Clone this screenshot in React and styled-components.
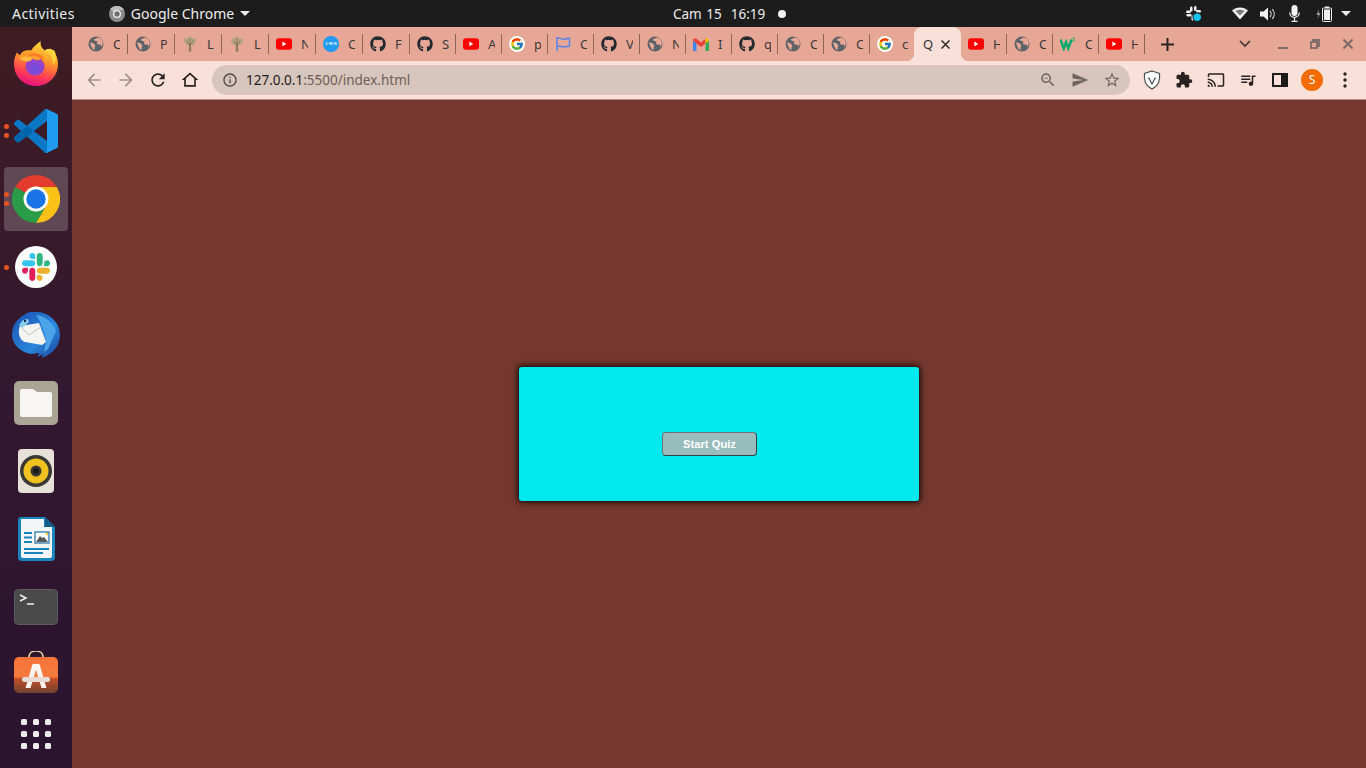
import React from "react";
import styled, { createGlobalStyle } from "styled-components";
import { FaGithub } from "react-icons/fa";
import { FcGoogle } from "react-icons/fc";

const Global = createGlobalStyle`
  html, body { margin: 0; padding: 0; height: 100%; overflow: hidden; }
  #root { height: 100%; }
  * { box-sizing: border-box; }
`;

const Screen = styled.div`
  width: 1366px;
  height: 768px;
  display: grid;
  grid-template-columns: 72px 1fr;
  grid-template-rows: 27px 1fr;
  font-family: "Noto Sans", sans-serif;
`;

/* ---------- GNOME top bar ---------- */
const TopBar = styled.header`
  grid-column: 1 / 3;
  display: flex;
  align-items: center;
  background: #1c1c1c;
  color: #ececec;
  font-size: 13.5px;
  white-space: nowrap;
`;
const TopLeft = styled.div`
  width: 673px;
  display: flex;
  align-items: center;
  padding-left: 12px;
`;
const Activities = styled.span`
  font-size: 14px;
  letter-spacing: 0.45px;
`;
const AppMenu = styled.div`
  display: flex;
  align-items: center;
  gap: 6px;
  margin-left: 34px;
  font-size: 14px;
`;
const Clock = styled.div`
  display: flex;
  align-items: center;
  gap: 13px;
  word-spacing: 1px;
`;
const ClockDot = styled.span`
  width: 8px;
  height: 8px;
  border-radius: 50%;
  background: #f2f2f2;
`;
const Tray = styled.div`
  margin-left: auto;
  margin-right: 15px;
  display: flex;
  align-items: center;
`;
const TraySlot = styled.span`
  display: flex;
  justify-content: center;
  width: ${(p) => p.$w}px;
`;
const Caret = styled.span`
  width: 0;
  height: 0;
  border-left: 5px solid transparent;
  border-right: 5px solid transparent;
  border-top: 5px solid #ececec;
`;

/* ---------- Dock ---------- */
const Dock = styled.nav`
  display: flex;
  flex-direction: column;
  align-items: center;
  gap: 4px;
  padding: 4px 0 11px;
  background: linear-gradient(180deg, #3f1c24 0%, #34182e 45%, #2b1430 100%);
`;
const DockItem = styled.div`
  position: relative;
  width: 64px;
  height: 64px;
  display: flex;
  align-items: center;
  justify-content: center;
  border-radius: 4px;
  background: ${(p) => (p.$active ? "rgba(255,255,255,0.2)" : "transparent")};
`;
const RunDots = styled.div`
  position: absolute;
  left: 0;
  top: 0;
  bottom: 0;
  display: flex;
  flex-direction: column;
  justify-content: center;
  gap: 4px;
`;
const RunDot = styled.span`
  width: 5px;
  height: 5px;
  border-radius: 50%;
  background: #e95420;
`;
const AppGrid = styled.div`
  margin-top: auto;
  display: grid;
  grid-template-columns: repeat(3, 6px);
  grid-auto-rows: 6px;
  gap: 6px;
  margin-bottom: 8px;
`;
const AppGridCell = styled.span`
  background: #eeeeee;
  border-radius: 1.5px;
`;

/* ---------- Chrome window ---------- */
const Browser = styled.div`
  display: flex;
  flex-direction: column;
  min-width: 0;
`;
const TabStrip = styled.div`
  height: 34px;
  display: flex;
  align-items: stretch;
  padding-left: 8px;
  background: #e7a797;
`;
const Tab = styled.div`
  position: relative;
  flex: 0 0 ${(p) => p.$w}px;
  display: flex;
  align-items: center;
  gap: 9px;
  padding-left: 8px;
  color: #3a3a3a;
  font-size: 13px;
  &::after {
    content: "";
    display: ${(p) => (p.$nosep ? "none" : "block")};
    position: absolute;
    right: -1px;
    top: 7px;
    height: 20px;
    width: 1px;
    background: #8f6459;
  }
`;
const ActiveTab = styled.div`
  position: relative;
  flex: 0 0 47px;
  margin-right: -1px;
  display: flex;
  align-items: center;
  gap: 7px;
  padding-left: 9px;
  background: #f9e0d8;
  border-radius: 8px 8px 0 0;
  color: #333;
  font-size: 13px;
  &::before, &::after {
    content: "";
    position: absolute;
    bottom: 0;
    width: 8px;
    height: 8px;
  }
  &::before {
    left: -8px;
    background: radial-gradient(circle at 0 0, transparent 8px, #f9e0d8 8.5px);
  }
  &::after {
    right: -8px;
    background: radial-gradient(circle at 100% 0, transparent 8px, #f9e0d8 8.5px);
  }
`;
const TabLabel = styled.span`
  width: ${(p) => p.$w || 7}px;
  overflow: hidden;
  white-space: nowrap;
`;
const StripControl = styled.span`
  display: flex;
  align-items: center;
  justify-content: center;
  width: ${(p) => p.$w}px;
  margin-left: ${(p) => p.$ml || 0}px;
`;
const Favicon = styled.span`
  flex: none;
  width: 16px;
  height: 16px;
  display: flex;
  align-items: center;
  justify-content: center;
  color: #24292e;
`;
const GoogleBadge = styled.span`
  width: 16px;
  height: 16px;
  display: flex;
  align-items: center;
  justify-content: center;
  border-radius: 50%;
  background: #fff;
`;

const Toolbar = styled.div`
  height: 39px;
  display: flex;
  align-items: center;
  padding: 0 5px 1px 6px;
  background: #f9e0d8;
  border-bottom: 1px solid #b48d80;
`;
const ToolBtn = styled.span`
  flex: none;
  width: ${(p) => p.$w || 32}px;
  height: 30px;
  display: flex;
  align-items: center;
  justify-content: center;
  color: ${(p) => p.$c || "#2a2221"};
`;
const Omnibox = styled.div`
  flex: none;
  width: 918px;
  height: 30px;
  margin: 0 6px;
  padding: 0 2px 0 8px;
  display: flex;
  align-items: center;
  border-radius: 15px;
  background: #d8c6be;
`;
const Url = styled.div`
  margin-left: 6px;
  flex: 1;
  font-size: 13.5px;
  color: #6b5f5b;
  white-space: nowrap;
`;
const UrlHost = styled.span`
  color: #211c1b;
`;
const Avatar = styled.span`
  width: 22px;
  height: 22px;
  border-radius: 50%;
  display: flex;
  align-items: center;
  justify-content: center;
  background: #f56b00;
  color: #fff;
  font-size: 12px;
`;

/* ---------- Page ---------- */
const Page = styled.main`
  flex: 1;
  display: flex;
  align-items: center;
  justify-content: center;
  background: #75382e;
`;
const QuizCard = styled.section`
  width: 400px;
  height: 134px;
  padding: 65px 0 0 143px;
  background: #00e9ee;
  border-radius: 3px;
  box-shadow: 0 0 6px 1px rgba(0, 0, 0, 0.95);
`;
const StartButton = styled.button`
  display: block;
  width: 95px;
  height: 24px;
  padding: 0;
  background: #97bcbb;
  border: 1px solid;
  border-color: #707070 #33434a #33434a #707070;
  border-radius: 4px;
  color: #fff;
  font: bold 11.2px "Liberation Sans", Arial, sans-serif;
`;

/* ---------- Icons ---------- */
const M = ({ d, s = 20, c = "currentColor" }) => (
  <svg width={s} height={s} viewBox="0 0 24 24" fill={c}><path d={d} /></svg>
);
const P = {
  back: "M20 11H7.83l5.59-5.59L12 4l-8 8 8 8 1.41-1.41L7.83 13H20v-2z",
  fwd: "M12 4l-1.41 1.41L16.17 11H4v2h12.17l-5.58 5.59L12 20l8-8z",
  reload: "M17.65 6.35C16.2 4.9 14.21 4 12 4c-4.42 0-7.99 3.58-7.99 8s3.57 8 7.99 8c3.73 0 6.84-2.55 7.73-6h-2.08c-.82 2.33-3.04 4-5.65 4-3.31 0-6-2.69-6-6s2.69-6 6-6c1.66 0 3.14.69 4.22 1.78L13 11h7V4l-2.35 2.35z",
  home: "M12 3L2 12h3v8h14v-8h3L12 3zm5 15H7v-7.81l5-4.5 5 4.5V18z",
  info: "M11 7h2v2h-2zm0 4h2v6h-2zm1-9C6.48 2 2 6.48 2 12s4.48 10 10 10 10-4.48 10-10S17.52 2 12 2zm0 18c-4.41 0-8-3.59-8-8s3.59-8 8-8 8 3.59 8 8-3.59 8-8 8z",
  zoom: "M15.5 14h-.79l-.28-.27C15.41 12.59 16 11.11 16 9.5 16 5.91 13.09 3 9.5 3S3 5.91 3 9.5 5.91 16 9.5 16c1.61 0 3.09-.59 4.23-1.57l.27.28v.79l5 4.99L20.49 19l-4.99-5zm-6 0C7.01 14 5 11.99 5 9.5S7.01 5 9.5 5 14 7.01 14 9.5 11.99 14 9.5 14zM7 9h5v1H7z",
  send: "M2.01 21L23 12 2.01 3 2 10l15 2-15 2z",
  star: "M22 9.24l-7.19-.62L12 2 9.19 8.63 2 9.24l5.46 4.73L5.82 21 12 17.27 18.18 21l-1.63-7.03L22 9.24zM12 15.4l-3.76 2.27 1-4.28-3.32-2.88 4.38-.38L12 6.1l1.71 4.04 4.38.38-3.32 2.88 1 4.28L12 15.4z",
  puzzle: "M20.5 11H19V7c0-1.1-.9-2-2-2h-4V3.5C13 2.12 11.88 1 10.5 1S8 2.12 8 3.5V5H4c-1.1 0-1.99.9-1.99 2v3.8H3.5c1.49 0 2.7 1.21 2.7 2.7s-1.21 2.7-2.7 2.7H2V20c0 1.1.9 2 2 2h3.8v-1.5c0-1.49 1.21-2.7 2.7-2.7 1.49 0 2.7 1.21 2.7 2.7V22H17c1.1 0 2-.9 2-2v-4h1.5c1.38 0 2.5-1.12 2.5-2.5S21.88 11 20.5 11z",
  cast: "M21 3H3c-1.1 0-2 .9-2 2v3h2V5h18v14h-7v2h7c1.1 0 2-.9 2-2V5c0-1.1-.9-2-2-2zM1 18v3h3c0-1.66-1.34-3-3-3zm0-4v2c2.76 0 5 2.24 5 5h2c0-3.87-3.13-7-7-7zm0-4v2c4.97 0 9 4.03 9 9h2c0-6.08-4.93-11-11-11z",
  queue: "M15 6H3v2h12V6zm0 4H3v2h12v-2zM3 16h8v-2H3v2zM17 6v8.18c-.31-.11-.65-.18-1-.18-1.66 0-3 1.34-3 3s1.34 3 3 3 3-1.34 3-3V8h3V6h-5z",
};

const Globe = () => (
  <svg width="16" height="16" viewBox="0 0 16 16">
    <circle cx="8" cy="8" r="7.5" fill="#5f6368" />
    <path d="M2 6.5l3 .5 2 2 .3 1.6-1 1.2.6 2.2L4.5 13 3 9.5zM9.5 1.5L7 3 5.5 3.2 7 5l2.5.3-.7 1.7 1 1.4 3 .3.8 2.3 1-2.4.3-2.4-1.9-3.6z" fill="#e7a797" />
  </svg>
);
const Tree = () => (
  <svg width="16" height="16" viewBox="0 0 16 16">
    <path d="M7.2 8h1.6l.6 7.5H6.6z" fill="#8a7a5e" />
    <g fill="#b3a283">
      <circle cx="4" cy="4.5" r="2.2" /><circle cx="8" cy="3" r="2.4" /><circle cx="12" cy="4.5" r="2.2" />
      <circle cx="5.5" cy="7.5" r="2" /><circle cx="10.5" cy="7.5" r="2" />
    </g>
    <path d="M8 9L5 5M8 9l3-4M8 9V3" stroke="#6d6048" strokeWidth=".8" />
  </svg>
);
const YouTube = () => (
  <svg width="16" height="12" viewBox="0 0 16 12">
    <rect width="16" height="11.4" y=".3" rx="3" fill="#f00" />
    <path d="M6.4 3.6v4.6L10.3 6z" fill="#fff" />
  </svg>
);
const Cwn = () => (
  <svg width="16" height="16" viewBox="0 0 16 16">
    <circle cx="8" cy="8" r="8" fill="#1e9bf0" />
    <text x="8" y="9.3" textAnchor="middle" fontSize="3.6" fontFamily="Liberation Sans" fontWeight="bold" fill="#fff">C·W·N</text>
  </svg>
);
const Google = () => (
  <GoogleBadge><FcGoogle size={14} /></GoogleBadge>
);
const Flag = () => (
  <svg width="16" height="16" viewBox="0 0 16 16" fill="none" stroke="#5f86e0" strokeWidth="1.6">
    <path d="M2 1v14M2 2.500c3-1.500 4 .8 6.500.8S12 2.500 14.500 2v8c-2.500.500-3.500 1-6 .8S5 9.500 2 10.500" />
  </svg>
);
const Gmail = () => (
  <svg width="16" height="13" viewBox="0 0 16 13">
    <path d="M0 2.500V13h3.500V5.500z" fill="#4285f4" />
    <path d="M12.500 5.500V13H16V2.500z" fill="#34a853" />
    <path d="M0 2.500C0 .5 2 -.5 3.500 .8L8 4.500l4.500-3.700 0 4.700L8 9 3.500 5.500z" fill="#ea4335" />
    <path d="M12.500 .8C14 -.5 16 .5 16 2.500L12.500 5.500z" fill="#fbbc04" />
  </svg>
);
const W3 = () => (
  <svg width="16" height="14" viewBox="0 0 16 14">
    <path d="M.5 2.500l3.200 9 2.300-6.500 2.300 6.500 3.200-9" fill="none" stroke="#04aa6d" strokeWidth="2.400" />
    <path d="M12.300 1h2.300l-1.200 1.300c1.300.1 1.300 2-.1 2h-1" fill="none" stroke="#04aa6d" strokeWidth=".8" />
  </svg>
);
const GitHub = () => <FaGithub size={16} />;

const ChromeMark = () => (
  <svg width="48" height="48" viewBox="0 0 48 48">
    <path d="M24 0A24 24 0 0 1 44.800 12H24A12 12 0 0 0 13.600 18L3.200 12A24 24 0 0 1 24 0z" fill="#e33b2e" />
    <path d="M44.800 12A24 24 0 0 1 24 48L34.400 30A12 12 0 0 0 24 12z" fill="#fbc116" />
    <path d="M3.200 12A24 24 0 0 0 24 48L34.400 30A12 12 0 0 1 13.600 18z" fill="#2a9b46" />
    <circle cx="24" cy="24" r="12.500" fill="#fff" />
    <circle cx="24" cy="24" r="9.700" fill="#1b73e8" />
  </svg>
);
const Firefox = () => (
  <svg width="44" height="45" viewBox="0 0 46 47">
    <defs>
      <linearGradient id="ffA" x1="0.7" y1="0" x2="0.4" y2="1">
        <stop offset="0" stopColor="#ffe141" /><stop offset=".4" stopColor="#ff9a28" />
        <stop offset=".75" stopColor="#ff3d55" /><stop offset="1" stopColor="#e5127e" />
      </linearGradient>
      <radialGradient id="ffC" cx=".5" cy=".65" r=".6">
        <stop offset="0" stopColor="#6a4ee6" /><stop offset="1" stopColor="#a43ec0" />
      </radialGradient>
    </defs>
    <path d="M28 0c-1 4 1 8 4 10 1-1 4-2 6-2 1 1 2 1 3 1 3 5 5 9 5 15 0 13-10 23-23 23S0 37 0 24c0-5 1-8 3-12l3 3c2-4 6-6 12-5 2-4 6-7 10-10z" fill="url(#ffA)" />
    <path d="M28 0c-1 5 2 9 6 11 5 3 8 9 7 15 3-5 4-11 1-16-2 0-3-1-4-2-2 0-5 1-6 2-3-2-5-6-4-10z" fill="#ffd43a" />
    <circle cx="22" cy="26" r="10" fill="url(#ffC)" />
    <path d="M5 19c5-3 12-3 16 0 3 2 7 1 8-2-4-5-12-7-17-5-3 1-6 3-7 7z" fill="#ff9c2e" />
    <path d="M6 18c3 3 7 4 11 3l3-3c-4-2-10-2-14 0z" fill="#ffb93a" />
    <path d="M14 16c4-4 11-4 16 0 1 2 1 5-1 8 1-3 0-5-2-7-4-2-9-2-13-1z" fill="#ff7a1f" />
  </svg>
);
const VSCode = () => (
  <svg width="44" height="44" viewBox="0 0 100 100">
    <path d="M96.460 10.800 75.860.900a6.230 6.230 0 0 0-7.100 1.200L29.300 38.100 12.100 25.100a4.160 4.160 0 0 0-5.300.200L1.300 30.300a4.170 4.170 0 0 0 0 6.200L16.200 50 1.300 63.600a4.170 4.170 0 0 0 0 6.200l5.500 5a4.160 4.160 0 0 0 5.300.200l17.200-13 39.400 36a6.200 6.200 0 0 0 7.100 1.200l20.600-9.900A6.250 6.250 0 0 0 100 83.700V16.400a6.250 6.250 0 0 0-3.540-5.600zM75 72.700 45.100 50 75 27.300z" fill="#0a78c4" />
    <path d="M1.300 63.600a4.170 4.170 0 0 0 0 6.200l5.500 5a4.160 4.160 0 0 0 5.300.200l17.200-13L45.100 50 29.300 38.100z" fill="#0065a9" />
    <path d="M70.850 99.320a6.200 6.200 0 0 0 4.980-.190l20.590-9.900A6.250 6.250 0 0 0 100 83.600V16.400a6.250 6.250 0 0 0-3.540-5.630L75.830.870a6.220 6.220 0 0 0-7.100 1.210 3.650 3.650 0 0 1 6.270 2.580v90.680a3.650 3.650 0 0 1-6.270 2.580c.6.630 1.320 1.100 2.120 1.400z" fill="#1f9cf0" />
  </svg>
);
const Slack = () => (
  <svg width="42" height="42" viewBox="0 0 42 42">
    <circle cx="21" cy="21" r="21" fill="#fff" />
    <g transform="translate(7 7) scale(.228)">
      <path d="M25.800 77.600c0 7.100-5.800 12.900-12.900 12.900S0 84.700 0 77.600s5.800-12.900 12.900-12.900h12.900v12.900zm6.500 0c0-7.100 5.800-12.900 12.900-12.900s12.900 5.800 12.900 12.900v32.300c0 7.100-5.800 12.900-12.900 12.900s-12.900-5.800-12.900-12.900V77.600z" fill="#e01e5a" />
      <path d="M45.200 25.800c-7.100 0-12.900-5.800-12.900-12.900S38.100 0 45.200 0s12.900 5.800 12.900 12.900v12.900H45.200zm0 6.500c7.100 0 12.900 5.800 12.900 12.900s-5.800 12.900-12.900 12.900H12.900C5.800 58.100 0 52.300 0 45.200s5.800-12.900 12.900-12.900h32.300z" fill="#36c5f0" />
      <path d="M97 45.200c0-7.100 5.800-12.900 12.900-12.900s12.900 5.800 12.900 12.900-5.800 12.900-12.900 12.900H97V45.200zm-6.500 0c0 7.100-5.800 12.900-12.900 12.900s-12.900-5.800-12.900-12.900V12.900C64.700 5.800 70.500 0 77.600 0s12.900 5.800 12.900 12.900v32.300z" fill="#2eb67d" />
      <path d="M77.600 97c7.100 0 12.900 5.800 12.900 12.900s-5.800 12.900-12.900 12.900-12.900-5.800-12.900-12.900V97h12.900zm0-6.500c-7.100 0-12.900-5.800-12.900-12.900s5.800-12.900 12.900-12.900h32.300c7.100 0 12.900 5.800 12.900 12.900s-5.800 12.900-12.900 12.900H77.600z" fill="#ecb22e" />
    </g>
  </svg>
);
const Thunderbird = () => (
  <svg width="48" height="48" viewBox="0 0 48 48">
    <defs>
      <linearGradient id="tb" x1="0" y1="0" x2="1" y2="1">
        <stop offset="0" stopColor="#1a4fb0" /><stop offset=".6" stopColor="#2a86dc" /><stop offset="1" stopColor="#1a3f9a" />
      </linearGradient>
    </defs>
    <path d="M12 4c4-4 10-3 14-3 12 1 22 11 22 23 0 9-5 16-12 20l-6 3 1-4-5 3 1-4-8 1C8 41 0 33 0 24 0 14 5 8 12 4z" fill="url(#tb)" />
    <path d="M24 4c9 1 17 7 20 16l-8 18-4 3 2-10c-1-10-5-20-10-27z" fill="#4ba3e8" />
    <path d="M8 15l19-3 7 19-4 3-17-3C8 30 5 21 8 15z" fill="#f4f4f2" />
    <path d="M8 15l9 9 13-9" fill="none" stroke="#b8bcc4" strokeWidth=".9" />
    <path d="M7 14l4-5 5-1 1 3-7 6z" fill="#8bd0ea" />
    <circle cx="13" cy="10" r="1.200" fill="#0e2a5c" />
  </svg>
);
const Files = () => (
  <svg width="44" height="44" viewBox="0 0 44 44">
    <rect width="44" height="44" rx="5" fill="#a9a493" />
    <path d="M6 10a2 2 0 0 1 2-2h11l4 3h13a2 2 0 0 1 2 2v21a2 2 0 0 1-2 2H8a2 2 0 0 1-2-2z" fill="#f7f6f4" />
  </svg>
);
const Rhythmbox = () => (
  <svg width="36" height="44" viewBox="0 0 36 44">
    <rect width="36" height="44" rx="4" fill="#e6e2d8" />
    <circle cx="18" cy="22" r="16" fill="#3b3936" />
    <circle cx="18" cy="22" r="12.500" fill="#f0c21f" />
    <circle cx="18" cy="22" r="5.500" fill="#3a3835" />
    <circle cx="18" cy="22" r="3" fill="#1c1b1a" />
  </svg>
);
const Writer = () => (
  <svg width="37" height="44" viewBox="0 0 37 44">
    <path d="M3 0h24l10 10v30a4 4 0 0 1-4 4H4a4 4 0 0 1-4-4V3a3 3 0 0 1 3-3z" fill="#1a84bd" />
    <path d="M3 2h23v8h8v29a2 2 0 0 1-2 2H5a2 2 0 0 1-2-2z" fill="#f3f6f8" />
    <path d="M27 0l10 10h-10z" fill="#125e88" />
    <path d="M6 15h8v2H6zM6 19.500h8v2H6zM6 24h8v2H6zM6 31h25v2H6zM6 35h19v2H6z" fill="#1a84bd" />
    <rect x="17" y="15" width="14" height="11" fill="#fff" stroke="#1a6e9e" strokeWidth="1.200" />
    <path d="M18 25l4-6 2 2 2-1 4 5z" fill="#555" />
    <path d="M27 16h3v3z" fill="#f5c518" />
  </svg>
);
const Terminal = () => (
  <svg width="44" height="36" viewBox="0 0 44 36">
    <rect x=".5" y=".5" width="43" height="35" rx="4" fill="#4a4a4a" stroke="#5e5e5e" />
    <path d="M6 6l6 3-6 3" fill="none" stroke="#f0f0f0" strokeWidth="1.500" />
    <path d="M13 15h7" stroke="#f0f0f0" strokeWidth="1.500" />
  </svg>
);
const Software = () => (
  <svg width="44" height="48" viewBox="0 0 44 48">
    <defs>
      <linearGradient id="sw" x1="0" y1="0" x2="0" y2="1">
        <stop offset="0" stopColor="#f7743a" /><stop offset=".56" stopColor="#f47a3c" />
        <stop offset=".6" stopColor="#c2502a" /><stop offset="1" stopColor="#71412f" />
      </linearGradient>
    </defs>
    <path d="M15 6c0-8 14-8 14 0" fill="none" stroke="#f4d7a8" strokeWidth="1.600" />
    <rect y="6" width="44" height="36" rx="5" fill="url(#sw)" />
    <path d="M18.500 13h7l7 24h-5l-5.500-18-5.500 18h-5z" fill="#fbf3ec" />
    <rect x="8" y="26" width="28" height="5" rx="2.500" fill="#e6dad2" />
  </svg>
);

const Wifi = () => (
  <svg width="16" height="13" viewBox="0 0 16 13">
    <path d="M8 12.500L0 3.500C4.500-.6 11.500-.6 16 3.500z" fill="#f2f2f2" />
    <path d="M8 8.500L3.500 4c2.500-1.800 6.500-1.800 9 0z" fill="#1c1c1c" opacity=".55" />
  </svg>
);
const Volume = () => (
  <svg width="16" height="14" viewBox="0 0 16 14">
    <path d="M0 4.500h3.500L8 .5v13l-4.500-4H0z" fill="#f2f2f2" />
    <path d="M10 4c1.400 1.600 1.400 4.400 0 6M12.300 2.200c2.500 2.800 2.500 6.800 0 9.600" fill="none" stroke="#d5d5d5" strokeWidth="1.200" />
  </svg>
);
const Mic = () => (
  <svg width="11" height="17" viewBox="0 0 11 17">
    <rect x="2.500" y="0" width="6" height="11" rx="3" fill="#f2f2f2" />
    <path d="M.7 7.500c0 6.500 9.600 6.500 9.600 0M5.500 12v4M2.500 16.400h6" fill="none" stroke="#f2f2f2" strokeWidth="1.200" />
  </svg>
);
const Battery = () => (
  <svg width="16" height="16" viewBox="0 0 16 16">
    <path d="M3 3L.5 9H2.500L1.500 13 4.500 7H2.500z" fill="#9a9a9a" />
    <rect x="6.500" y="2" width="9" height="13.500" rx="1" fill="#1c1c1c" stroke="#f2f2f2" />
    <rect x="9" y=".5" width="4" height="1.500" fill="#f2f2f2" />
    <rect x="8" y="3.500" width="6" height="10.500" fill="#f2f2f2" />
  </svg>
);
const SlackTray = () => (
  <svg width="16" height="16" viewBox="0 0 16 16">
    <g fill="#efefef">
      <rect x="4" y="0.500" width="2.500" height="5" rx="1.200" /><rect x="8" y="0" width="2.500" height="5" rx="1.200" />
      <rect x="0" y="4.500" width="5" height="2.500" rx="1.200" /><rect x="0.500" y="8" width="5" height="2.500" rx="1.200" />
      <rect x="10" y="4" width="5" height="2.500" rx="1.200" /><rect x="5.500" y="9.500" width="2.500" height="5" rx="1.200" />
    </g>
    <circle cx="11.200" cy="11.200" r="4.300" fill="#12c4f0" stroke="#1c1c1c" />
  </svg>
);
const ChromeGrey = () => (
  <svg width="16" height="16" viewBox="0 0 16 16">
    <circle cx="8" cy="8" r="8" fill="#8c8c8c" />
    <path d="M8 0a8 8 0 0 1 7 4H8a4 4 0 0 0-3.500 2L1 3a8 8 0 0 1 7-3z" fill="#bdbdbd" />
    <circle cx="8" cy="8" r="4" fill="#f2f2f2" />
    <circle cx="8" cy="8" r="2.700" fill="#6f6f6f" />
  </svg>
);
const Shield = () => (
  <svg width="18" height="20" viewBox="0 0 18 20">
    <path d="M9 1l7.500 2.500c.5 6 0 11.500-7.500 15.500C1.500 15 1 9.500 1.500 3.500z" fill="#fff" stroke="#4a4f54" strokeWidth="1.200" />
    <path d="M5.500 7.500L9 14l3.500-6.500" fill="none" stroke="#4a4f54" strokeWidth="1.300" />
  </svg>
);
const SidePanel = () => (
  <svg width="16" height="14" viewBox="0 0 16 14">
    <rect x="1" y="1" width="14" height="12" fill="none" stroke="#1d1a1a" strokeWidth="2" />
    <rect x="9" y="1" width="6" height="12" fill="#1d1a1a" />
  </svg>
);
const Dots = () => (
  <svg width="4" height="16" viewBox="0 0 4 16" fill="#2a2221">
    <circle cx="2" cy="2" r="1.700" /><circle cx="2" cy="8" r="1.700" /><circle cx="2" cy="14" r="1.700" />
  </svg>
);
const Plus = () => (
  <svg width="13" height="13" viewBox="0 0 13 13"><path d="M6.500 0v13M0 6.500h13" stroke="#2a2221" strokeWidth="2" /></svg>
);
const Chevron = () => (
  <svg width="12" height="8" viewBox="0 0 12 8"><path d="M1 1l5 5 5-5" fill="none" stroke="#3d3331" strokeWidth="1.600" /></svg>
);
const Minimize = () => (
  <svg width="10" height="10" viewBox="0 0 10 10"><path d="M0 9h10" stroke="#7d6b67" strokeWidth="2" /></svg>
);
const Restore = () => (
  <svg width="10" height="10" viewBox="0 0 10 10" fill="none" stroke="#7d6b67" strokeWidth="1.800">
    <rect x="1" y="3" width="6" height="6" /><path d="M3 3V1h6v6H7" />
  </svg>
);
const CloseWin = () => (
  <svg width="10" height="10" viewBox="0 0 10 10"><path d="M.5.5l9 9M9.500.5l-9 9" stroke="#7d6b67" strokeWidth="2" /></svg>
);
const CloseTab = () => (
  <svg width="9" height="9" viewBox="0 0 9 9"><path d="M.5.5l8 8M8.500.5l-8 8" stroke="#2f2a29" strokeWidth="1.500" /></svg>
);

const leftTabs = [
  [Globe, "C", 47], [Globe, "P", 47], [Tree, "L", 47], [Tree, "L", 47], [YouTube, "N", 47], [Cwn, "C", 47], [GitHub, "F", 47],
  [GitHub, "S", 46], [YouTube, "A", 46], [Google, "p", 46], [Flag, "C", 46], [GitHub, "V", 46], [Globe, "N", 46], [Gmail, "I", 46],
  [GitHub, "q", 46], [Globe, "C", 46], [Globe, "C", 46], [Google, "c", 45, true],
];
const rightTabs = [[YouTube, "H"], [Globe, "C"], [W3, "C"], [YouTube, "H"]];

const dockApps = [
  { Icon: Firefox },
  { Icon: VSCode, dots: 2 },
  { Icon: ChromeMark, dots: 2, active: true },
  { Icon: Slack, dots: 1 },
  { Icon: Thunderbird },
  { Icon: Files },
  { Icon: Rhythmbox },
  { Icon: Writer },
  { Icon: Terminal },
  { Icon: Software },
];

export default function App() {
  return (
    <Screen>
      <Global />
      <TopBar>
        <TopLeft>
          <Activities>Activities</Activities>
          <AppMenu>
            <ChromeGrey />
            <span>Google Chrome</span>
            <Caret />
          </AppMenu>
        </TopLeft>
        <Clock>
          <span>Cam 15&nbsp; 16:19</span>
          <ClockDot />
        </Clock>
        <Tray>
          <TraySlot $w={69}><SlackTray /></TraySlot>
          <TraySlot $w={24}><Wifi /></TraySlot>
          <TraySlot $w={31}><Volume /></TraySlot>
          <TraySlot $w={23}><Mic /></TraySlot>
          <TraySlot $w={35}><Battery /></TraySlot>
          <Caret />
        </Tray>
      </TopBar>

      <Dock>
        {dockApps.map(({ Icon, dots, active }, i) => (
          <DockItem key={i} $active={active}>
            {dots && (
              <RunDots>
                {Array.from({ length: dots }).map((_, j) => <RunDot key={j} />)}
              </RunDots>
            )}
            <Icon />
          </DockItem>
        ))}
        <AppGrid>
          {Array.from({ length: 9 }).map((_, i) => <AppGridCell key={i} />)}
        </AppGrid>
      </Dock>

      <Browser>
        <TabStrip>
          {leftTabs.map(([Icon, label, w, nosep], i) => (
            <Tab key={i} $w={w} $nosep={nosep}>
              <Favicon><Icon /></Favicon>
              <TabLabel>{label}</TabLabel>
            </Tab>
          ))}
          <ActiveTab>
            <TabLabel $w={11}>Q</TabLabel>
            <CloseTab />
          </ActiveTab>
          {rightTabs.map(([Icon, label], i) => (
            <Tab key={i} $w={46}>
              <Favicon><Icon /></Favicon>
              <TabLabel>{label}</TabLabel>
            </Tab>
          ))}
          <StripControl $w={46}><Plus /></StripControl>
          <StripControl $w={34} $ml={38}><Chevron /></StripControl>
          <StripControl $w={42}><Minimize /></StripControl>
          <StripControl $w={22}><Restore /></StripControl>
          <StripControl $w={36} $ml={4}><CloseWin /></StripControl>
        </TabStrip>

        <Toolbar>
          <ToolBtn $c="#a3908a"><M d={P.back} /></ToolBtn>
          <ToolBtn $c="#a3908a"><M d={P.fwd} /></ToolBtn>
          <ToolBtn><M d={P.reload} /></ToolBtn>
          <ToolBtn><M d={P.home} /></ToolBtn>
          <Omnibox>
            <ToolBtn $w={20} $c="#4f4745"><M d={P.info} s={16} /></ToolBtn>
            <Url><UrlHost>127.0.0.1</UrlHost>:5500/index.html</Url>
            <ToolBtn $c="#6f6663"><M d={P.zoom} s={18} /></ToolBtn>
            <ToolBtn $c="#6f6663"><M d={P.send} s={18} /></ToolBtn>
            <ToolBtn $c="#6f6663"><M d={P.star} s={18} /></ToolBtn>
          </Omnibox>
          <ToolBtn><Shield /></ToolBtn>
          <ToolBtn><M d={P.puzzle} s={18} /></ToolBtn>
          <ToolBtn><M d={P.cast} s={18} /></ToolBtn>
          <ToolBtn><M d={P.queue} s={18} /></ToolBtn>
          <ToolBtn><SidePanel /></ToolBtn>
          <ToolBtn><Avatar>S</Avatar></ToolBtn>
          <ToolBtn $w={34}><Dots /></ToolBtn>
        </Toolbar>

        <Page>
          <QuizCard>
            <StartButton>Start Quiz</StartButton>
          </QuizCard>
        </Page>
      </Browser>
    </Screen>
  );
}
